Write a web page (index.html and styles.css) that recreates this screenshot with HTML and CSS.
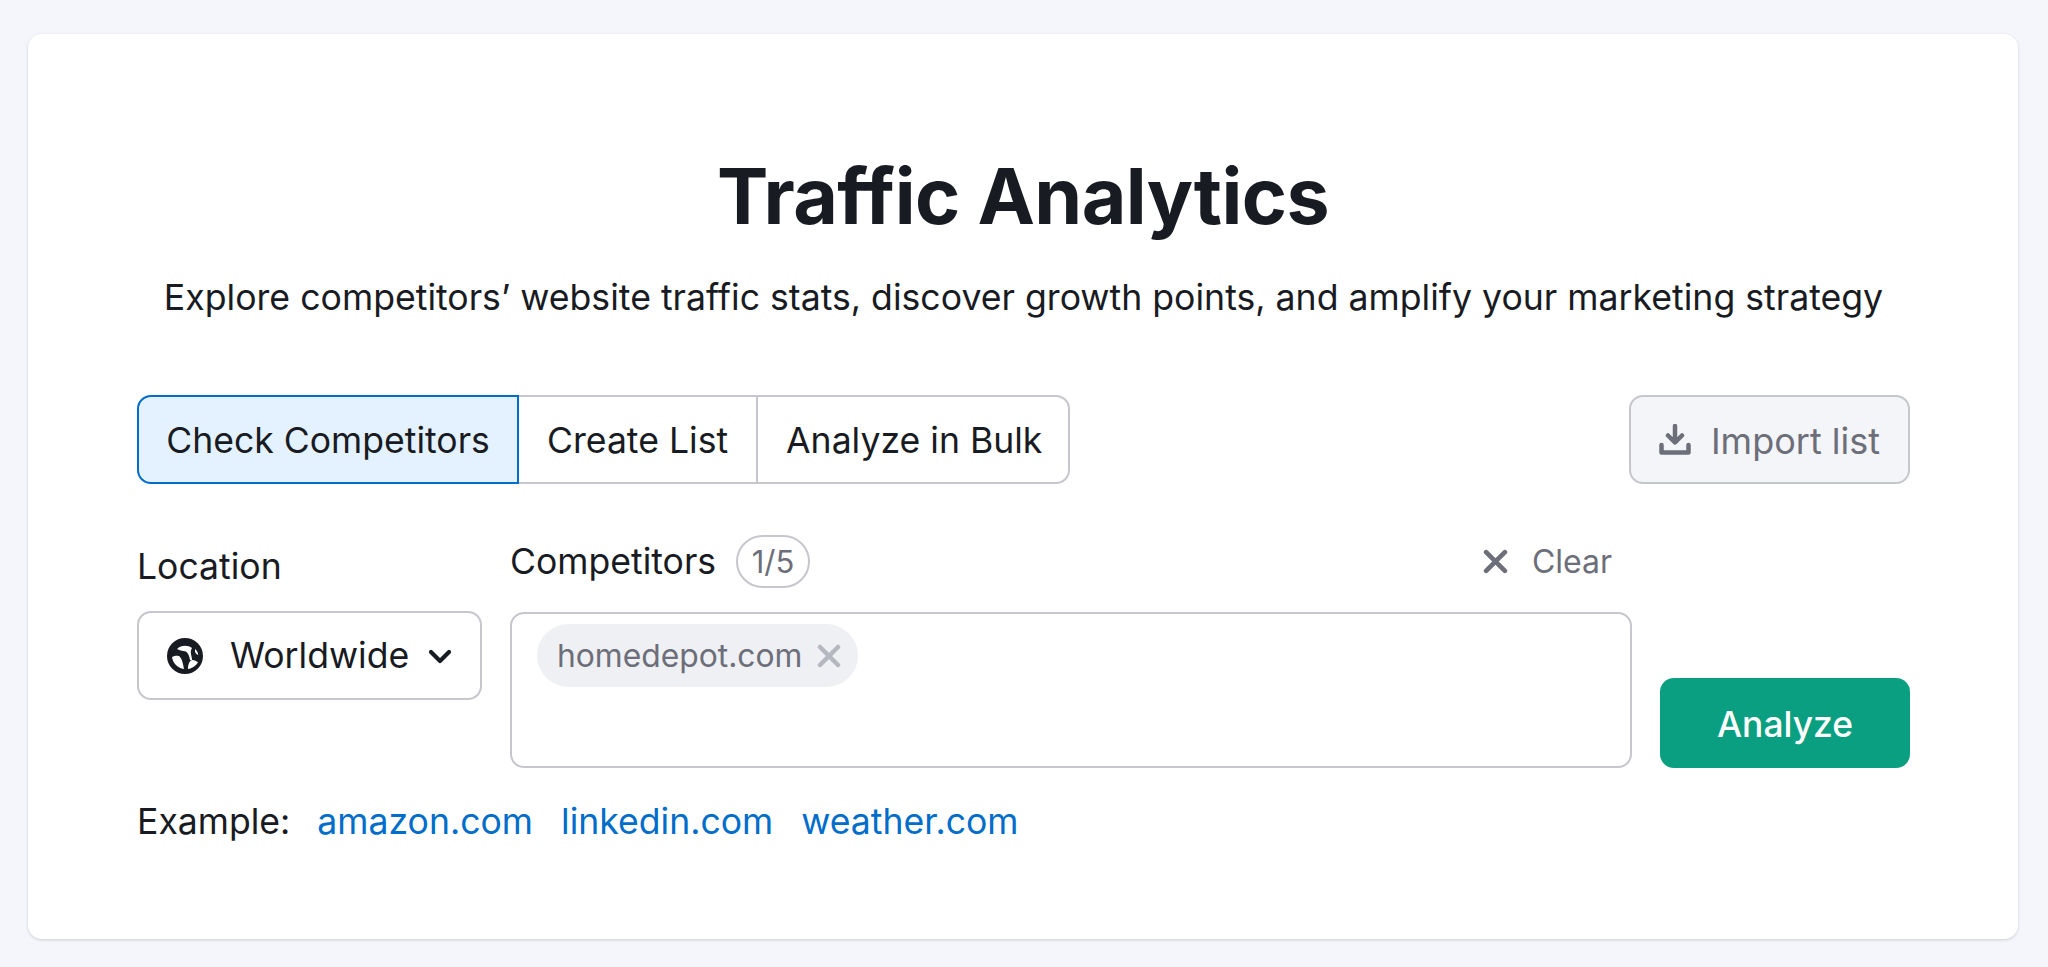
FILE: index.html
```html
<!DOCTYPE html>
<html lang="en">
<head>
<meta charset="utf-8">
<title>Traffic Analytics</title>
<link rel="stylesheet" href="styles.css">
</head>
<body>
<main class="card">
  <h1 class="title">Traffic Analytics</h1>
  <p class="subtitle">Explore competitors’ website traffic stats, discover growth points, and amplify your marketing strategy</p>
  <div class="toolbar">
    <div class="tabs">
      <button class="tab tab-active">Check Competitors</button>
      <button class="tab tab-mid">Create List</button>
      <button class="tab tab-last">Analyze in Bulk</button>
    </div>
    <button class="import">
      <svg class="import-icon" viewBox="0 0 32 32"><path d="M16 2v16M9 11.500 16 18.500l7-7" fill="none" stroke="#6c6e79" stroke-width="4.500" stroke-linecap="round" stroke-linejoin="round"/><path d="M2.500 21v7.500h27V21" fill="none" stroke="#6c6e79" stroke-width="4.500" stroke-linejoin="round" stroke-linecap="round"/></svg>
      Import list
    </button>
  </div>
  <div class="form">
    <div class="loc">
      <div class="loc-label">Location</div>
      <button class="select">
        <svg class="globe" viewBox="0 0 36 36"><circle cx="18" cy="18" r="18" fill="#191b23"/><path d="M5 19C8 18 11 17 13 19 15 21 16 26 17 31 11 30 6 26 5 19Z" fill="#fff"/><path d="M21 31C21 27 22 23 25 22 27 21.500 29 23 31 24 29 28 25 30.500 21 31Z" fill="#fff"/><path d="M10 11C14 7 21 7 25 10 24 12 23.500 13 24 16 24.300 18 25 20 25 22L23 22C22.500 18 21 15 19 13.500 15 13 12 12 10 11Z" fill="#fff"/><path d="M28 11C30 12.500 31 14.500 31.300 17 29 16.500 27.500 14 28 11Z" fill="#fff"/></svg>
        <span class="select-text">Worldwide</span>
        <svg class="chev" viewBox="0 0 24 16"><path d="M3 3l9 9 9-9" fill="none" stroke="#191b23" stroke-width="4.200" stroke-linecap="round" stroke-linejoin="round"/></svg>
      </button>
    </div>
    <div class="comp">
      <div class="comp-head">
        <span class="comp-label">Competitors</span>
        <span class="badge">1/5</span>
        <span class="clear">
          <svg class="clear-x" viewBox="0 0 24 24"><path d="M3 3l18 18M21 3 3 21" stroke="#6c6e79" stroke-width="4.500" stroke-linecap="round"/></svg>
          Clear
        </span>
      </div>
      <div class="box">
        <span class="chip">homedepot.com
          <svg class="chip-x" viewBox="0 0 24 24"><path d="M3 3l18 18M21 3 3 21" stroke="#b6b8c0" stroke-width="4.500" stroke-linecap="round"/></svg>
        </span>
      </div>
    </div>
    <button class="analyze">Analyze</button>
  </div>
  <div class="examples">
    <span class="ex-label">Example:</span>
    <a class="ex-link">amazon.com</a>
    <a class="ex-link">linkedin.com</a>
    <a class="ex-link">weather.com</a>
  </div>
</main>
</body>
</html>
```

FILE: styles.css
```css
* { box-sizing: border-box; }
html, body { margin: 0; height: 100%; }
body {
  background: #f4f6fb;
  font-family: Inter, "Liberation Sans", sans-serif;
  color: #191b23;
  padding: 34px 30px 28px 28px;
  overflow: hidden;
}
button { font-family: inherit; }
.card {
  background: #fff;
  border-radius: 14px;
  box-shadow: 0 1px 3px rgba(25, 27, 35, .18);
  height: 905px;
  padding: 117px 108px 0 109px;
}
.title {
  margin: 0 1px 0 0;
  text-align: center;
  font-size: 77px;
  line-height: 90px;
  font-weight: 700;
  letter-spacing: -0.6px;
}
.subtitle {
  margin: 34px 0 0;
  text-align: center;
  font-size: 35.65px;
  line-height: 44px;
  font-weight: 400;
}
.toolbar {
  display: flex;
  justify-content: space-between;
  margin-top: 76px;
}
.tabs { display: flex; }
.tab {
  height: 89px;
  font-size: 35.6px;
  color: #191b23;
  background: #fff;
  border: 2px solid #c5c7cc;
  border-left-width: 0;
  padding: 2px 28px 0;
}
.tab-active {
  width: 382px;
  padding: 2px 0 0;
  background: #e4f2ff;
  border: 2px solid #006dca;
  border-radius: 14px 0 0 14px;
}
.tab-last {
  padding: 2px 26px 0 28px;
  border-radius: 0 14px 14px 0;
}
.import {
  width: 281px;
  height: 89px;
  display: flex;
  align-items: center;
  justify-content: center;
  gap: 20px;
  padding: 2px 0 0;
  font-size: 36px;
  color: #6c6e79;
  background: #f4f5f8;
  border: 2px solid #c5c7cc;
  border-radius: 14px;
}
.import-icon { width: 32px; height: 32px; flex: none; margin-top: -2px; }
.form {
  display: flex;
  align-items: flex-end;
  margin-top: 50px;
  gap: 28px;
}
.loc { width: 345px; margin-bottom: 68px; }
.loc-label { font-size: 35.6px; line-height: 44px; margin-bottom: 22px; padding-top: 2px; }
.select {
  width: 100%;
  height: 89px;
  display: flex;
  align-items: center;
  padding: 0 28px;
  font-size: 35.6px;
  color: #191b23;
  background: #fff;
  border: 2px solid #c5c7cc;
  border-radius: 14px;
}
.globe { width: 36px; height: 36px; flex: none; }
.select-text { margin-left: 27px; }
.chev { width: 24px; height: 16px; margin-left: auto; flex: none; margin-top: 2px; }
.comp { flex: 1; }
.comp-head {
  display: flex;
  align-items: center;
  height: 54px;
  margin-bottom: 24px;
  font-size: 35.6px;
}
.badge {
  margin-left: 20px;
  width: 74px;
  height: 53px;
  border: 2px solid #c5c7cc;
  border-radius: 27px;
  display: flex;
  align-items: center;
  justify-content: center;
  font-size: 31px;
  color: #6c6e79;
}
.clear {
  margin-left: auto;
  margin-right: 20px;
  display: flex;
  align-items: center;
  gap: 24px;
  font-size: 32px;
  color: #6c6e79;
}
.clear-x { width: 25px; height: 25px; }
.box {
  height: 156px;
  border: 2px solid #c5c7cc;
  border-radius: 14px;
  padding: 10px 25px;
}
.chip {
  display: inline-flex;
  align-items: center;
  gap: 15px;
  height: 63px;
  padding: 0 17px 0 20px;
  background: #eff0f3;
  border-radius: 32px;
  font-size: 31.8px;
  color: #6c6e79;
}
.chip-x { width: 24px; height: 24px; flex: none; }
.analyze {
  width: 250px;
  height: 90px;
  padding: 2px 0 0;
  background: #0a9f80;
  color: #fff;
  border: 0;
  border-radius: 14px;
  font-size: 35.4px;
  font-weight: 500;
}
.examples {
  display: flex;
  align-items: center;
  margin-top: 32px;
  font-size: 35.6px;
}
.ex-label { margin-right: 27px; }
.ex-link { color: #006dca; margin-right: 28px; }
```
